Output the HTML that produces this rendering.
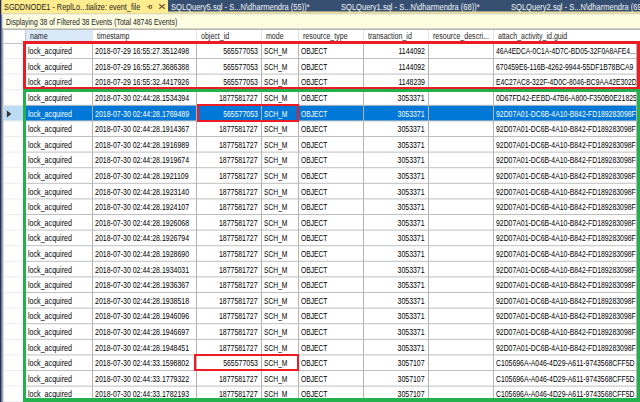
<!DOCTYPE html><html><head><meta charset="utf-8"><style>
*{margin:0;padding:0;box-sizing:border-box}
html,body{width:640px;height:402px;overflow:hidden;background:#fff;font-family:"Liberation Sans",sans-serif;position:relative}
.a{position:absolute}
.t{position:absolute;white-space:nowrap;font-size:8.4px;line-height:1;color:#1e1e1e;transform-origin:0 0;-webkit-text-stroke:0px currentColor}
.tr{position:absolute;white-space:nowrap;font-size:8.4px;line-height:1;color:#1e1e1e;transform-origin:100% 0;-webkit-text-stroke:0px currentColor}
</style></head><body>
<div class="a" style="left:0px;top:0px;width:640px;height:11px;background:#364e6f;"></div>
<div class="a" style="left:0px;top:11px;width:640px;height:1px;background:#a09f88;"></div>
<div class="a" style="left:0px;top:12px;width:640px;height:1px;background:#e6dc9a;"></div>
<div class="a" style="left:0px;top:13px;width:640px;height:1px;background:#dedab4;"></div>
<div class="a" style="left:0px;top:14px;width:640px;height:1px;background:#efefdc;"></div>
<div class="a" style="left:0px;top:0px;width:168px;height:13px;background:#ffec8f;"></div>
<div class="t" style="left:3.9px;top:3.3px;transform:scaleX(0.874);font-size:8.4px">SGDDNODE1 - ReplLo...tialize: event_file</div>
<svg class="a" style="left:146px;top:3px" width="8" height="8" viewBox="0 0 8 8"><path d="M1 3.7H3.4M3.4 2V5.8M3.4 2.5H5.7V5.2H3.4" fill="none" stroke="#74552f" stroke-width="0.9"/></svg>
<svg class="a" style="left:158px;top:3px" width="8" height="8" viewBox="0 0 8 8"><path d="M1.2 1.2L6.8 5.8M6.8 1.2L1.2 5.8" stroke="#7a5836" stroke-width="1.25"/></svg>
<div class="t" style="left:171px;top:3.3px;transform:scaleX(0.9);font-size:8.4px;color:#f4f6fa;-webkit-text-stroke:0">SQLQuery5.sql - S...N\dharmendra (55))*</div>
<div class="t" style="left:341px;top:3.3px;transform:scaleX(0.9);font-size:8.4px;color:#f4f6fa;-webkit-text-stroke:0">SQLQuery1.sql - S...N\dharmendra (68))*</div>
<div class="t" style="left:510.7px;top:3.3px;transform:scaleX(0.9);font-size:8.4px;color:#f4f6fa;-webkit-text-stroke:0">SQLQuery2.sql - S...N\dharmendra (69))*</div>
<div class="a" style="left:0px;top:15px;width:640px;height:13px;background:#fdfde1;"></div>
<div class="a" style="left:0px;top:28px;width:640px;height:1px;background:#d6d4c2;"></div>
<div class="a" style="left:0px;top:29px;width:640px;height:1px;background:#b4b4b4;"></div>
<div class="t" style="left:6.1px;top:18.5px;transform:scaleX(0.84);font-size:8.2px">Displaying 38 of Filtered 38 Events (Total 48746 Events)</div>
<div class="a" style="left:26px;top:30px;width:66px;height:13px;background:#d9e9f8;"></div>
<div class="a" style="left:3px;top:43px;width:640px;height:1px;background:#c4c4c4;"></div>
<div class="a" style="left:25px;top:30px;width:1px;height:13px;background:#c4c4c4;"></div>
<div class="a" style="left:92px;top:30px;width:1px;height:13px;background:#e3e3e3;"></div>
<div class="a" style="left:196px;top:30px;width:1px;height:13px;background:#e3e3e3;"></div>
<div class="a" style="left:261px;top:30px;width:1px;height:13px;background:#e3e3e3;"></div>
<div class="a" style="left:298px;top:30px;width:1px;height:13px;background:#e3e3e3;"></div>
<div class="a" style="left:363px;top:30px;width:1px;height:13px;background:#e3e3e3;"></div>
<div class="a" style="left:428px;top:30px;width:1px;height:13px;background:#e3e3e3;"></div>
<div class="a" style="left:493px;top:30px;width:1px;height:13px;background:#e3e3e3;"></div>
<div class="t" style="left:29.8px;top:31.9px;transform:scaleX(0.84);">name</div>
<div class="t" style="left:96.8px;top:31.9px;transform:scaleX(0.84);">timestamp</div>
<div class="t" style="left:200.8px;top:31.9px;transform:scaleX(0.84);">object_id</div>
<div class="t" style="left:265.8px;top:31.9px;transform:scaleX(0.84);">mode</div>
<div class="t" style="left:302.8px;top:31.9px;transform:scaleX(0.84);">resource_type</div>
<div class="t" style="left:367.8px;top:31.9px;transform:scaleX(0.84);">transaction_id</div>
<div class="t" style="left:432.8px;top:31.9px;transform:scaleX(0.84);">resource_descri...</div>
<div class="t" style="left:497.8px;top:31.9px;transform:scaleX(0.84);">attach_activity_id.guid</div>
<div class="a" style="left:3px;top:105px;width:640px;height:16px;background:#bcdcf4;"></div>
<div class="a" style="left:26px;top:105px;width:640px;height:16px;background:#0078d7;"></div>
<svg class="a" style="left:6px;top:109px" width="7" height="9" viewBox="0 0 7 9"><path d="M0.9 1.6L5.3 5.0L0.9 8.4Z" fill="#333333"/></svg>
<div class="t" style="left:27.8px;top:47.1px;transform:scaleX(0.85);color:#000000">lock_acquired</div>
<div class="t" style="left:94.8px;top:47.1px;transform:scaleX(0.835);color:#000000">2018-07-29 16:55:27.3512498</div>
<div class="tr" style="right:382.0px;top:47.1px;transform:scaleX(0.83);color:#000000">565577053</div>
<div class="t" style="left:263.8px;top:47.1px;transform:scaleX(0.8);color:#000000">SCH_M</div>
<div class="t" style="left:300.8px;top:47.1px;transform:scaleX(0.8);color:#000000">OBJECT</div>
<div class="tr" style="right:215.0px;top:47.1px;transform:scaleX(0.83);color:#000000">1144092</div>
<div class="t" style="left:495.8px;top:47.1px;transform:scaleX(0.8);color:#000000">46A4EDCA-0C1A-4D7C-BD05-32F0A8AFE4...</div>
<div class="t" style="left:27.8px;top:62.7px;transform:scaleX(0.85);color:#000000">lock_acquired</div>
<div class="t" style="left:94.8px;top:62.7px;transform:scaleX(0.835);color:#000000">2018-07-29 16:55:27.3686388</div>
<div class="tr" style="right:382.0px;top:62.7px;transform:scaleX(0.83);color:#000000">565577053</div>
<div class="t" style="left:263.8px;top:62.7px;transform:scaleX(0.8);color:#000000">SCH_M</div>
<div class="t" style="left:300.8px;top:62.7px;transform:scaleX(0.8);color:#000000">OBJECT</div>
<div class="tr" style="right:215.0px;top:62.7px;transform:scaleX(0.83);color:#000000">1144092</div>
<div class="t" style="left:495.8px;top:62.7px;transform:scaleX(0.82);color:#000000;width:170.98px;overflow:hidden">670459E6-116B-4262-9944-55DF1B78BCA9</div>
<div class="t" style="left:27.8px;top:78.3px;transform:scaleX(0.85);color:#000000">lock_acquired</div>
<div class="t" style="left:94.8px;top:78.3px;transform:scaleX(0.835);color:#000000">2018-07-29 16:55:32.4417926</div>
<div class="tr" style="right:382.0px;top:78.3px;transform:scaleX(0.83);color:#000000">565577053</div>
<div class="t" style="left:263.8px;top:78.3px;transform:scaleX(0.8);color:#000000">SCH_M</div>
<div class="t" style="left:300.8px;top:78.3px;transform:scaleX(0.8);color:#000000">OBJECT</div>
<div class="tr" style="right:215.0px;top:78.3px;transform:scaleX(0.83);color:#000000">1148239</div>
<div class="t" style="left:495.8px;top:78.3px;transform:scaleX(0.805);color:#000000;width:174.16px;overflow:hidden">E4C27AC8-322F-4D0C-8046-BC9AA42E302D</div>
<div class="t" style="left:27.8px;top:93.89999999999999px;transform:scaleX(0.85);color:#000000">lock_acquired</div>
<div class="t" style="left:94.8px;top:93.89999999999999px;transform:scaleX(0.835);color:#000000">2018-07-30 02:44:28.1534394</div>
<div class="tr" style="right:382.0px;top:93.89999999999999px;transform:scaleX(0.83);color:#000000">1877581727</div>
<div class="t" style="left:263.8px;top:93.89999999999999px;transform:scaleX(0.8);color:#000000">SCH_M</div>
<div class="t" style="left:300.8px;top:93.89999999999999px;transform:scaleX(0.8);color:#000000">OBJECT</div>
<div class="tr" style="right:215.0px;top:93.89999999999999px;transform:scaleX(0.83);color:#000000">3053371</div>
<div class="t" style="left:495.8px;top:93.89999999999999px;transform:scaleX(0.82);color:#000000;width:170.98px;overflow:hidden">0D67FD42-EEBD-47B6-A800-F350B0E21825</div>
<div class="t" style="left:27.8px;top:109.5px;transform:scaleX(0.85);color:#fff">lock_acquired</div>
<div class="t" style="left:94.8px;top:109.5px;transform:scaleX(0.835);color:#fff">2018-07-30 02:44:28.1769489</div>
<div class="tr" style="right:382.0px;top:109.5px;transform:scaleX(0.83);color:#fff">565577053</div>
<div class="t" style="left:263.8px;top:109.5px;transform:scaleX(0.8);color:#fff">SCH_M</div>
<div class="t" style="left:300.8px;top:109.5px;transform:scaleX(0.8);color:#fff">OBJECT</div>
<div class="tr" style="right:215.0px;top:109.5px;transform:scaleX(0.83);color:#fff">3053371</div>
<div class="t" style="left:495.8px;top:109.5px;transform:scaleX(0.82);color:#fff;width:170.98px;overflow:hidden">92D07A01-DC6B-4A10-B842-FD189283098F</div>
<div class="t" style="left:27.8px;top:125.10000000000001px;transform:scaleX(0.85);color:#000000">lock_acquired</div>
<div class="t" style="left:94.8px;top:125.10000000000001px;transform:scaleX(0.835);color:#000000">2018-07-30 02:44:28.1914367</div>
<div class="tr" style="right:382.0px;top:125.10000000000001px;transform:scaleX(0.83);color:#000000">1877581727</div>
<div class="t" style="left:263.8px;top:125.10000000000001px;transform:scaleX(0.8);color:#000000">SCH_M</div>
<div class="t" style="left:300.8px;top:125.10000000000001px;transform:scaleX(0.8);color:#000000">OBJECT</div>
<div class="tr" style="right:215.0px;top:125.10000000000001px;transform:scaleX(0.83);color:#000000">3053371</div>
<div class="t" style="left:495.8px;top:125.10000000000001px;transform:scaleX(0.82);color:#000000;width:170.98px;overflow:hidden">92D07A01-DC6B-4A10-B842-FD189283098F</div>
<div class="t" style="left:27.8px;top:140.7px;transform:scaleX(0.85);color:#000000">lock_acquired</div>
<div class="t" style="left:94.8px;top:140.7px;transform:scaleX(0.835);color:#000000">2018-07-30 02:44:28.1916989</div>
<div class="tr" style="right:382.0px;top:140.7px;transform:scaleX(0.83);color:#000000">1877581727</div>
<div class="t" style="left:263.8px;top:140.7px;transform:scaleX(0.8);color:#000000">SCH_M</div>
<div class="t" style="left:300.8px;top:140.7px;transform:scaleX(0.8);color:#000000">OBJECT</div>
<div class="tr" style="right:215.0px;top:140.7px;transform:scaleX(0.83);color:#000000">3053371</div>
<div class="t" style="left:495.8px;top:140.7px;transform:scaleX(0.82);color:#000000;width:170.98px;overflow:hidden">92D07A01-DC6B-4A10-B842-FD189283098F</div>
<div class="t" style="left:27.8px;top:156.29999999999998px;transform:scaleX(0.85);color:#000000">lock_acquired</div>
<div class="t" style="left:94.8px;top:156.29999999999998px;transform:scaleX(0.835);color:#000000">2018-07-30 02:44:28.1919674</div>
<div class="tr" style="right:382.0px;top:156.29999999999998px;transform:scaleX(0.83);color:#000000">1877581727</div>
<div class="t" style="left:263.8px;top:156.29999999999998px;transform:scaleX(0.8);color:#000000">SCH_M</div>
<div class="t" style="left:300.8px;top:156.29999999999998px;transform:scaleX(0.8);color:#000000">OBJECT</div>
<div class="tr" style="right:215.0px;top:156.29999999999998px;transform:scaleX(0.83);color:#000000">3053371</div>
<div class="t" style="left:495.8px;top:156.29999999999998px;transform:scaleX(0.82);color:#000000;width:170.98px;overflow:hidden">92D07A01-DC6B-4A10-B842-FD189283098F</div>
<div class="t" style="left:27.8px;top:171.89999999999998px;transform:scaleX(0.85);color:#000000">lock_acquired</div>
<div class="t" style="left:94.8px;top:171.89999999999998px;transform:scaleX(0.835);color:#000000">2018-07-30 02:44:28.1921109</div>
<div class="tr" style="right:382.0px;top:171.89999999999998px;transform:scaleX(0.83);color:#000000">1877581727</div>
<div class="t" style="left:263.8px;top:171.89999999999998px;transform:scaleX(0.8);color:#000000">SCH_M</div>
<div class="t" style="left:300.8px;top:171.89999999999998px;transform:scaleX(0.8);color:#000000">OBJECT</div>
<div class="tr" style="right:215.0px;top:171.89999999999998px;transform:scaleX(0.83);color:#000000">3053371</div>
<div class="t" style="left:495.8px;top:171.89999999999998px;transform:scaleX(0.82);color:#000000;width:170.98px;overflow:hidden">92D07A01-DC6B-4A10-B842-FD189283098F</div>
<div class="t" style="left:27.8px;top:187.5px;transform:scaleX(0.85);color:#000000">lock_acquired</div>
<div class="t" style="left:94.8px;top:187.5px;transform:scaleX(0.835);color:#000000">2018-07-30 02:44:28.1923140</div>
<div class="tr" style="right:382.0px;top:187.5px;transform:scaleX(0.83);color:#000000">1877581727</div>
<div class="t" style="left:263.8px;top:187.5px;transform:scaleX(0.8);color:#000000">SCH_M</div>
<div class="t" style="left:300.8px;top:187.5px;transform:scaleX(0.8);color:#000000">OBJECT</div>
<div class="tr" style="right:215.0px;top:187.5px;transform:scaleX(0.83);color:#000000">3053371</div>
<div class="t" style="left:495.8px;top:187.5px;transform:scaleX(0.82);color:#000000;width:170.98px;overflow:hidden">92D07A01-DC6B-4A10-B842-FD189283098F</div>
<div class="t" style="left:27.8px;top:203.1px;transform:scaleX(0.85);color:#000000">lock_acquired</div>
<div class="t" style="left:94.8px;top:203.1px;transform:scaleX(0.835);color:#000000">2018-07-30 02:44:28.1924107</div>
<div class="tr" style="right:382.0px;top:203.1px;transform:scaleX(0.83);color:#000000">1877581727</div>
<div class="t" style="left:263.8px;top:203.1px;transform:scaleX(0.8);color:#000000">SCH_M</div>
<div class="t" style="left:300.8px;top:203.1px;transform:scaleX(0.8);color:#000000">OBJECT</div>
<div class="tr" style="right:215.0px;top:203.1px;transform:scaleX(0.83);color:#000000">3053371</div>
<div class="t" style="left:495.8px;top:203.1px;transform:scaleX(0.82);color:#000000;width:170.98px;overflow:hidden">92D07A01-DC6B-4A10-B842-FD189283098F</div>
<div class="t" style="left:27.8px;top:218.7px;transform:scaleX(0.85);color:#000000">lock_acquired</div>
<div class="t" style="left:94.8px;top:218.7px;transform:scaleX(0.835);color:#000000">2018-07-30 02:44:28.1926068</div>
<div class="tr" style="right:382.0px;top:218.7px;transform:scaleX(0.83);color:#000000">1877581727</div>
<div class="t" style="left:263.8px;top:218.7px;transform:scaleX(0.8);color:#000000">SCH_M</div>
<div class="t" style="left:300.8px;top:218.7px;transform:scaleX(0.8);color:#000000">OBJECT</div>
<div class="tr" style="right:215.0px;top:218.7px;transform:scaleX(0.83);color:#000000">3053371</div>
<div class="t" style="left:495.8px;top:218.7px;transform:scaleX(0.82);color:#000000;width:170.98px;overflow:hidden">92D07A01-DC6B-4A10-B842-FD189283098F</div>
<div class="t" style="left:27.8px;top:234.29999999999998px;transform:scaleX(0.85);color:#000000">lock_acquired</div>
<div class="t" style="left:94.8px;top:234.29999999999998px;transform:scaleX(0.835);color:#000000">2018-07-30 02:44:28.1926794</div>
<div class="tr" style="right:382.0px;top:234.29999999999998px;transform:scaleX(0.83);color:#000000">1877581727</div>
<div class="t" style="left:263.8px;top:234.29999999999998px;transform:scaleX(0.8);color:#000000">SCH_M</div>
<div class="t" style="left:300.8px;top:234.29999999999998px;transform:scaleX(0.8);color:#000000">OBJECT</div>
<div class="tr" style="right:215.0px;top:234.29999999999998px;transform:scaleX(0.83);color:#000000">3053371</div>
<div class="t" style="left:495.8px;top:234.29999999999998px;transform:scaleX(0.82);color:#000000;width:170.98px;overflow:hidden">92D07A01-DC6B-4A10-B842-FD189283098F</div>
<div class="t" style="left:27.8px;top:249.89999999999998px;transform:scaleX(0.85);color:#000000">lock_acquired</div>
<div class="t" style="left:94.8px;top:249.89999999999998px;transform:scaleX(0.835);color:#000000">2018-07-30 02:44:28.1928690</div>
<div class="tr" style="right:382.0px;top:249.89999999999998px;transform:scaleX(0.83);color:#000000">1877581727</div>
<div class="t" style="left:263.8px;top:249.89999999999998px;transform:scaleX(0.8);color:#000000">SCH_M</div>
<div class="t" style="left:300.8px;top:249.89999999999998px;transform:scaleX(0.8);color:#000000">OBJECT</div>
<div class="tr" style="right:215.0px;top:249.89999999999998px;transform:scaleX(0.83);color:#000000">3053371</div>
<div class="t" style="left:495.8px;top:249.89999999999998px;transform:scaleX(0.82);color:#000000;width:170.98px;overflow:hidden">92D07A01-DC6B-4A10-B842-FD189283098F</div>
<div class="t" style="left:27.8px;top:265.5px;transform:scaleX(0.85);color:#000000">lock_acquired</div>
<div class="t" style="left:94.8px;top:265.5px;transform:scaleX(0.835);color:#000000">2018-07-30 02:44:28.1934031</div>
<div class="tr" style="right:382.0px;top:265.5px;transform:scaleX(0.83);color:#000000">1877581727</div>
<div class="t" style="left:263.8px;top:265.5px;transform:scaleX(0.8);color:#000000">SCH_M</div>
<div class="t" style="left:300.8px;top:265.5px;transform:scaleX(0.8);color:#000000">OBJECT</div>
<div class="tr" style="right:215.0px;top:265.5px;transform:scaleX(0.83);color:#000000">3053371</div>
<div class="t" style="left:495.8px;top:265.5px;transform:scaleX(0.82);color:#000000;width:170.98px;overflow:hidden">92D07A01-DC6B-4A10-B842-FD189283098F</div>
<div class="t" style="left:27.8px;top:281.09999999999997px;transform:scaleX(0.85);color:#000000">lock_acquired</div>
<div class="t" style="left:94.8px;top:281.09999999999997px;transform:scaleX(0.835);color:#000000">2018-07-30 02:44:28.1936367</div>
<div class="tr" style="right:382.0px;top:281.09999999999997px;transform:scaleX(0.83);color:#000000">1877581727</div>
<div class="t" style="left:263.8px;top:281.09999999999997px;transform:scaleX(0.8);color:#000000">SCH_M</div>
<div class="t" style="left:300.8px;top:281.09999999999997px;transform:scaleX(0.8);color:#000000">OBJECT</div>
<div class="tr" style="right:215.0px;top:281.09999999999997px;transform:scaleX(0.83);color:#000000">3053371</div>
<div class="t" style="left:495.8px;top:281.09999999999997px;transform:scaleX(0.82);color:#000000;width:170.98px;overflow:hidden">92D07A01-DC6B-4A10-B842-FD189283098F</div>
<div class="t" style="left:27.8px;top:296.7px;transform:scaleX(0.85);color:#000000">lock_acquired</div>
<div class="t" style="left:94.8px;top:296.7px;transform:scaleX(0.835);color:#000000">2018-07-30 02:44:28.1938518</div>
<div class="tr" style="right:382.0px;top:296.7px;transform:scaleX(0.83);color:#000000">1877581727</div>
<div class="t" style="left:263.8px;top:296.7px;transform:scaleX(0.8);color:#000000">SCH_M</div>
<div class="t" style="left:300.8px;top:296.7px;transform:scaleX(0.8);color:#000000">OBJECT</div>
<div class="tr" style="right:215.0px;top:296.7px;transform:scaleX(0.83);color:#000000">3053371</div>
<div class="t" style="left:495.8px;top:296.7px;transform:scaleX(0.82);color:#000000;width:170.98px;overflow:hidden">92D07A01-DC6B-4A10-B842-FD189283098F</div>
<div class="t" style="left:27.8px;top:312.29999999999995px;transform:scaleX(0.85);color:#000000">lock_acquired</div>
<div class="t" style="left:94.8px;top:312.29999999999995px;transform:scaleX(0.835);color:#000000">2018-07-30 02:44:28.1946096</div>
<div class="tr" style="right:382.0px;top:312.29999999999995px;transform:scaleX(0.83);color:#000000">1877581727</div>
<div class="t" style="left:263.8px;top:312.29999999999995px;transform:scaleX(0.8);color:#000000">SCH_M</div>
<div class="t" style="left:300.8px;top:312.29999999999995px;transform:scaleX(0.8);color:#000000">OBJECT</div>
<div class="tr" style="right:215.0px;top:312.29999999999995px;transform:scaleX(0.83);color:#000000">3053371</div>
<div class="t" style="left:495.8px;top:312.29999999999995px;transform:scaleX(0.82);color:#000000;width:170.98px;overflow:hidden">92D07A01-DC6B-4A10-B842-FD189283098F</div>
<div class="t" style="left:27.8px;top:327.9px;transform:scaleX(0.85);color:#000000">lock_acquired</div>
<div class="t" style="left:94.8px;top:327.9px;transform:scaleX(0.835);color:#000000">2018-07-30 02:44:28.1946697</div>
<div class="tr" style="right:382.0px;top:327.9px;transform:scaleX(0.83);color:#000000">1877581727</div>
<div class="t" style="left:263.8px;top:327.9px;transform:scaleX(0.8);color:#000000">SCH_M</div>
<div class="t" style="left:300.8px;top:327.9px;transform:scaleX(0.8);color:#000000">OBJECT</div>
<div class="tr" style="right:215.0px;top:327.9px;transform:scaleX(0.83);color:#000000">3053371</div>
<div class="t" style="left:495.8px;top:327.9px;transform:scaleX(0.82);color:#000000;width:170.98px;overflow:hidden">92D07A01-DC6B-4A10-B842-FD189283098F</div>
<div class="t" style="left:27.8px;top:343.49999999999994px;transform:scaleX(0.85);color:#000000">lock_acquired</div>
<div class="t" style="left:94.8px;top:343.49999999999994px;transform:scaleX(0.835);color:#000000">2018-07-30 02:44:28.1948451</div>
<div class="tr" style="right:382.0px;top:343.49999999999994px;transform:scaleX(0.83);color:#000000">1877581727</div>
<div class="t" style="left:263.8px;top:343.49999999999994px;transform:scaleX(0.8);color:#000000">SCH_M</div>
<div class="t" style="left:300.8px;top:343.49999999999994px;transform:scaleX(0.8);color:#000000">OBJECT</div>
<div class="tr" style="right:215.0px;top:343.49999999999994px;transform:scaleX(0.83);color:#000000">3053371</div>
<div class="t" style="left:495.8px;top:343.49999999999994px;transform:scaleX(0.82);color:#000000;width:170.98px;overflow:hidden">92D07A01-DC6B-4A10-B842-FD189283098F</div>
<div class="t" style="left:27.8px;top:359.09999999999997px;transform:scaleX(0.85);color:#000000">lock_acquired</div>
<div class="t" style="left:94.8px;top:359.09999999999997px;transform:scaleX(0.835);color:#000000">2018-07-30 02:44:33.1598802</div>
<div class="tr" style="right:382.0px;top:359.09999999999997px;transform:scaleX(0.83);color:#000000">565577053</div>
<div class="t" style="left:263.8px;top:359.09999999999997px;transform:scaleX(0.8);color:#000000">SCH_M</div>
<div class="t" style="left:300.8px;top:359.09999999999997px;transform:scaleX(0.8);color:#000000">OBJECT</div>
<div class="tr" style="right:215.0px;top:359.09999999999997px;transform:scaleX(0.83);color:#000000">3057107</div>
<div class="t" style="left:495.8px;top:359.09999999999997px;transform:scaleX(0.82);color:#000000;width:170.98px;overflow:hidden">C105696A-A046-4D29-A611-9743568CFF5D</div>
<div class="t" style="left:27.8px;top:374.69999999999993px;transform:scaleX(0.85);color:#000000">lock_acquired</div>
<div class="t" style="left:94.8px;top:374.69999999999993px;transform:scaleX(0.835);color:#000000">2018-07-30 02:44:33.1779322</div>
<div class="tr" style="right:382.0px;top:374.69999999999993px;transform:scaleX(0.83);color:#000000">1877581727</div>
<div class="t" style="left:263.8px;top:374.69999999999993px;transform:scaleX(0.8);color:#000000">SCH_M</div>
<div class="t" style="left:300.8px;top:374.69999999999993px;transform:scaleX(0.8);color:#000000">OBJECT</div>
<div class="tr" style="right:215.0px;top:374.69999999999993px;transform:scaleX(0.83);color:#000000">3057107</div>
<div class="t" style="left:495.8px;top:374.69999999999993px;transform:scaleX(0.82);color:#000000;width:170.98px;overflow:hidden">C105696A-A046-4D29-A611-9743568CFF5D</div>
<div class="t" style="left:27.8px;top:390.29999999999995px;transform:scaleX(0.85);color:#000000">lock_acquired</div>
<div class="t" style="left:94.8px;top:390.29999999999995px;transform:scaleX(0.835);color:#000000">2018-07-30 02:44:33.1782193</div>
<div class="tr" style="right:382.0px;top:390.29999999999995px;transform:scaleX(0.83);color:#000000">1877581727</div>
<div class="t" style="left:263.8px;top:390.29999999999995px;transform:scaleX(0.8);color:#000000">SCH_M</div>
<div class="t" style="left:300.8px;top:390.29999999999995px;transform:scaleX(0.8);color:#000000">OBJECT</div>
<div class="tr" style="right:215.0px;top:390.29999999999995px;transform:scaleX(0.83);color:#000000">3057107</div>
<div class="t" style="left:495.8px;top:390.29999999999995px;transform:scaleX(0.82);color:#000000;width:170.98px;overflow:hidden">C105696A-A046-4D29-A611-9743568CFF5D</div>
<div class="a" style="left:26px;top:58px;width:614px;height:1px;background:#bebebe;"></div>
<div class="a" style="left:3px;top:58px;width:22px;height:1px;background:#ececec;"></div>
<div class="a" style="left:26px;top:73px;width:614px;height:1px;background:#e5e5e5;"></div>
<div class="a" style="left:26px;top:74px;width:614px;height:1px;background:#d8d8d8;"></div>
<div class="a" style="left:3px;top:73px;width:22px;height:1px;background:#f7f7f7;"></div>
<div class="a" style="left:3px;top:74px;width:22px;height:1px;background:#f4f4f4;"></div>
<div class="a" style="left:26px;top:89px;width:614px;height:1px;background:#cbcbcb;"></div>
<div class="a" style="left:26px;top:90px;width:614px;height:1px;background:#f2f2f2;"></div>
<div class="a" style="left:3px;top:89px;width:22px;height:1px;background:#f0f0f0;"></div>
<div class="a" style="left:3px;top:90px;width:22px;height:1px;background:#fbfbfb;"></div>
<div class="a" style="left:26px;top:104px;width:614px;height:1px;background:#f2f2f2;"></div>
<div class="a" style="left:26px;top:105px;width:614px;height:1px;background:#98b0c3;"></div>
<div class="a" style="left:3px;top:104px;width:22px;height:1px;background:#fbfbfb;"></div>
<div class="a" style="left:3px;top:105px;width:22px;height:1px;background:#e2e9ee;"></div>
<div class="a" style="left:26px;top:120px;width:614px;height:1px;background:#72a2c8;"></div>
<div class="a" style="left:26px;top:121px;width:614px;height:1px;background:#e5e5e5;"></div>
<div class="a" style="left:3px;top:120px;width:22px;height:1px;background:#d9e6ef;"></div>
<div class="a" style="left:3px;top:121px;width:22px;height:1px;background:#f7f7f7;"></div>
<div class="a" style="left:26px;top:136px;width:614px;height:1px;background:#bebebe;"></div>
<div class="a" style="left:3px;top:136px;width:22px;height:1px;background:#ececec;"></div>
<div class="a" style="left:26px;top:151px;width:614px;height:1px;background:#e5e5e5;"></div>
<div class="a" style="left:26px;top:152px;width:614px;height:1px;background:#d8d8d8;"></div>
<div class="a" style="left:3px;top:151px;width:22px;height:1px;background:#f7f7f7;"></div>
<div class="a" style="left:3px;top:152px;width:22px;height:1px;background:#f4f4f4;"></div>
<div class="a" style="left:26px;top:167px;width:614px;height:1px;background:#cbcbcb;"></div>
<div class="a" style="left:26px;top:168px;width:614px;height:1px;background:#f2f2f2;"></div>
<div class="a" style="left:3px;top:167px;width:22px;height:1px;background:#f0f0f0;"></div>
<div class="a" style="left:3px;top:168px;width:22px;height:1px;background:#fbfbfb;"></div>
<div class="a" style="left:26px;top:182px;width:614px;height:1px;background:#f2f2f2;"></div>
<div class="a" style="left:26px;top:183px;width:614px;height:1px;background:#cbcbcb;"></div>
<div class="a" style="left:3px;top:182px;width:22px;height:1px;background:#fbfbfb;"></div>
<div class="a" style="left:3px;top:183px;width:22px;height:1px;background:#f0f0f0;"></div>
<div class="a" style="left:26px;top:198px;width:614px;height:1px;background:#d8d8d8;"></div>
<div class="a" style="left:26px;top:199px;width:614px;height:1px;background:#e5e5e5;"></div>
<div class="a" style="left:3px;top:198px;width:22px;height:1px;background:#f4f4f4;"></div>
<div class="a" style="left:3px;top:199px;width:22px;height:1px;background:#f7f7f7;"></div>
<div class="a" style="left:26px;top:214px;width:614px;height:1px;background:#bebebe;"></div>
<div class="a" style="left:3px;top:214px;width:22px;height:1px;background:#ececec;"></div>
<div class="a" style="left:26px;top:229px;width:614px;height:1px;background:#e5e5e5;"></div>
<div class="a" style="left:26px;top:230px;width:614px;height:1px;background:#d8d8d8;"></div>
<div class="a" style="left:3px;top:229px;width:22px;height:1px;background:#f7f7f7;"></div>
<div class="a" style="left:3px;top:230px;width:22px;height:1px;background:#f4f4f4;"></div>
<div class="a" style="left:26px;top:245px;width:614px;height:1px;background:#cbcbcb;"></div>
<div class="a" style="left:26px;top:246px;width:614px;height:1px;background:#f2f2f2;"></div>
<div class="a" style="left:3px;top:245px;width:22px;height:1px;background:#f0f0f0;"></div>
<div class="a" style="left:3px;top:246px;width:22px;height:1px;background:#fbfbfb;"></div>
<div class="a" style="left:26px;top:260px;width:614px;height:1px;background:#f2f2f2;"></div>
<div class="a" style="left:26px;top:261px;width:614px;height:1px;background:#cbcbcb;"></div>
<div class="a" style="left:3px;top:260px;width:22px;height:1px;background:#fbfbfb;"></div>
<div class="a" style="left:3px;top:261px;width:22px;height:1px;background:#f0f0f0;"></div>
<div class="a" style="left:26px;top:276px;width:614px;height:1px;background:#d8d8d8;"></div>
<div class="a" style="left:26px;top:277px;width:614px;height:1px;background:#e5e5e5;"></div>
<div class="a" style="left:3px;top:276px;width:22px;height:1px;background:#f4f4f4;"></div>
<div class="a" style="left:3px;top:277px;width:22px;height:1px;background:#f7f7f7;"></div>
<div class="a" style="left:26px;top:292px;width:614px;height:1px;background:#bebebe;"></div>
<div class="a" style="left:3px;top:292px;width:22px;height:1px;background:#ececec;"></div>
<div class="a" style="left:26px;top:307px;width:614px;height:1px;background:#e5e5e5;"></div>
<div class="a" style="left:26px;top:308px;width:614px;height:1px;background:#d8d8d8;"></div>
<div class="a" style="left:3px;top:307px;width:22px;height:1px;background:#f7f7f7;"></div>
<div class="a" style="left:3px;top:308px;width:22px;height:1px;background:#f4f4f4;"></div>
<div class="a" style="left:26px;top:323px;width:614px;height:1px;background:#cbcbcb;"></div>
<div class="a" style="left:26px;top:324px;width:614px;height:1px;background:#f2f2f2;"></div>
<div class="a" style="left:3px;top:323px;width:22px;height:1px;background:#f0f0f0;"></div>
<div class="a" style="left:3px;top:324px;width:22px;height:1px;background:#fbfbfb;"></div>
<div class="a" style="left:26px;top:338px;width:614px;height:1px;background:#f2f2f2;"></div>
<div class="a" style="left:26px;top:339px;width:614px;height:1px;background:#cbcbcb;"></div>
<div class="a" style="left:3px;top:338px;width:22px;height:1px;background:#fbfbfb;"></div>
<div class="a" style="left:3px;top:339px;width:22px;height:1px;background:#f0f0f0;"></div>
<div class="a" style="left:26px;top:354px;width:614px;height:1px;background:#d8d8d8;"></div>
<div class="a" style="left:26px;top:355px;width:614px;height:1px;background:#e5e5e5;"></div>
<div class="a" style="left:3px;top:354px;width:22px;height:1px;background:#f4f4f4;"></div>
<div class="a" style="left:3px;top:355px;width:22px;height:1px;background:#f7f7f7;"></div>
<div class="a" style="left:26px;top:370px;width:614px;height:1px;background:#bebebe;"></div>
<div class="a" style="left:3px;top:370px;width:22px;height:1px;background:#ececec;"></div>
<div class="a" style="left:26px;top:385px;width:614px;height:1px;background:#e5e5e5;"></div>
<div class="a" style="left:26px;top:386px;width:614px;height:1px;background:#d8d8d8;"></div>
<div class="a" style="left:3px;top:385px;width:22px;height:1px;background:#f7f7f7;"></div>
<div class="a" style="left:3px;top:386px;width:22px;height:1px;background:#f4f4f4;"></div>
<div class="a" style="left:26px;top:401px;width:614px;height:1px;background:#cbcbcb;"></div>
<div class="a" style="left:26px;top:402px;width:614px;height:1px;background:#f2f2f2;"></div>
<div class="a" style="left:3px;top:401px;width:22px;height:1px;background:#f0f0f0;"></div>
<div class="a" style="left:3px;top:402px;width:22px;height:1px;background:#fbfbfb;"></div>
<div class="a" style="left:25px;top:44px;width:1px;height:358px;background:#b4b4b4;"></div>
<div class="a" style="left:92px;top:44px;width:1px;height:358px;background:#b4b4b4;"></div>
<div class="a" style="left:196px;top:44px;width:1px;height:358px;background:#b4b4b4;"></div>
<div class="a" style="left:261px;top:44px;width:1px;height:358px;background:#b4b4b4;"></div>
<div class="a" style="left:298px;top:44px;width:1px;height:358px;background:#b4b4b4;"></div>
<div class="a" style="left:363px;top:44px;width:1px;height:358px;background:#b4b4b4;"></div>
<div class="a" style="left:428px;top:44px;width:1px;height:358px;background:#b4b4b4;"></div>
<div class="a" style="left:493px;top:44px;width:1px;height:358px;background:#b4b4b4;"></div>
<div class="a" style="left:636px;top:44px;width:1px;height:358px;background:#b4b4b4;"></div>
<div class="a" style="left:0px;top:0px;width:1px;height:402px;background:#22305a;"></div>
<div class="a" style="left:1px;top:0px;width:1px;height:15px;background:#b4ad84;"></div>
<div class="a" style="left:1px;top:15px;width:1px;height:13px;background:#7080a0;"></div>
<div class="a" style="left:2px;top:15px;width:1px;height:13px;background:#d0d4d8;"></div>
<div class="a" style="left:1px;top:28px;width:1px;height:374px;background:#6b7a94;"></div>
<div class="a" style="left:2px;top:28px;width:1px;height:374px;background:#a8a8a8;"></div>
<div class="a" style="left:3px;top:28px;width:1px;height:374px;background:#dcdcdc;"></div>
<div class="a" style="left:23px;top:41px;width:617px;height:48px;border:3px solid #ed1c24;border-bottom-width:2px"></div>
<div class="a" style="left:23px;top:89px;width:617px;height:313px;border:3px solid #22b14c;border-bottom-width:4px"></div>
<div class="a" style="left:197px;top:104px;width:102px;height:18px;border:2px solid #ed1c24"></div>
<div class="a" style="left:194px;top:354px;width:105px;height:17px;border:2px solid #ed1c24"></div>
</body></html>
